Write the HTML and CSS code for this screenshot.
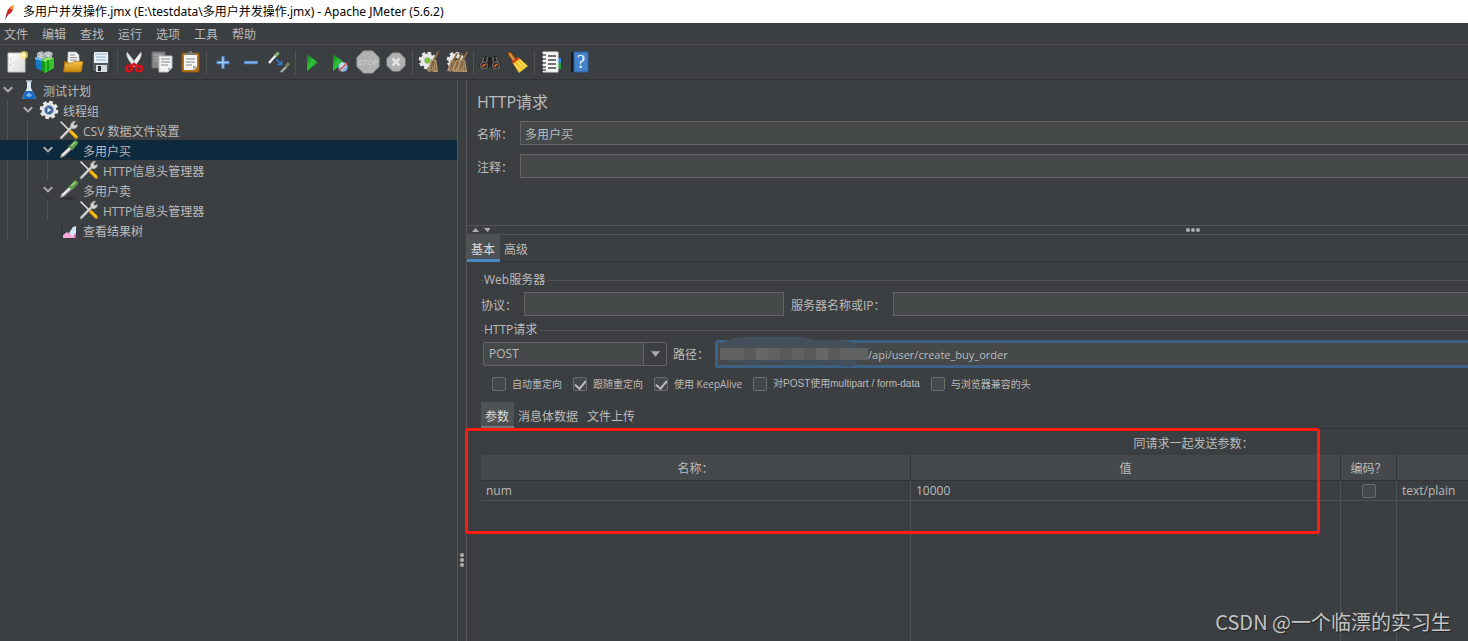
FILE: index.html
```html
<!DOCTYPE html>
<html lang="zh-CN">
<head>
<meta charset="utf-8">
<title>Apache JMeter</title>
<link rel="stylesheet" href="styles.css">
</head>
<body>
<svg class="defs" aria-hidden="true">
  <defs>
    <linearGradient id="gold" x1="0" y1="0" x2="0" y2="1"><stop offset="0" stop-color="#f4c34c"/><stop offset="1" stop-color="#c8860a"/></linearGradient>
    <linearGradient id="play" x1="0" y1="0" x2="1" y2="1"><stop offset="0" stop-color="#0b7a1c"/><stop offset=".5" stop-color="#2fc437"/><stop offset="1" stop-color="#0a6a14"/></linearGradient>
    <linearGradient id="paper" x1="0" y1="0" x2="1" y2="1"><stop offset="0" stop-color="#fff"/><stop offset="1" stop-color="#d8d8d8"/></linearGradient>
    <symbol id="tools" viewBox="0 0 20 20">
      <path d="M2.2 17.8 12.5 7.5" stroke="#8f9190" stroke-width="3" stroke-linecap="round"/>
      <path d="M2.4 17.4 12.5 7" stroke="#e4e6e3" stroke-width="1.4" stroke-linecap="round"/>
      <path d="M11.2 6.6 12 3.3 14.8 1.1 17 1.3 14.6 3.8 15.4 5.4 18.3 4.4 18.6 6 16.6 8.6 13.4 9Z" fill="#d3d5d2" stroke="#858784" stroke-width=".6"/>
      <path d="m2 2 8.5 8.5" stroke="#dedede" stroke-width="1.6" stroke-linecap="round"/>
      <path d="m11.800 11.800 5.400 5.200" stroke="#d99a00" stroke-width="3.600" stroke-linecap="round"/>
      <path d="m12 11.500 5 4.800" stroke="#ffd02c" stroke-width="1.6" stroke-linecap="round"/>
    </symbol>
    <symbol id="dropper" viewBox="0 0 20 20">
      <ellipse cx="9" cy="18.6" rx="8" ry="1" fill="#292c2e"/>
      <path d="m1.2 17.8 1.2-3.6 8.4-8 2.7 2.6-8.6 7.8Z" fill="#b8bbb9" stroke="#777" stroke-width=".6"/>
      <path d="m3.2 15.2 8-7.5" stroke="#fafafa" stroke-width="1.4"/>
      <path d="m9.6 5 5 4.8" stroke="#3f5a3a" stroke-width="2"/>
      <path d="m12.8 6.8 3.800-3.900" stroke="#5c9d47" stroke-width="4.8" stroke-linecap="round"/>
      <path d="m12.6 5.600 3.200-3.200" stroke="#9fd487" stroke-width="1.4" stroke-linecap="round"/>
    </symbol>
    <symbol id="broom" viewBox="0 0 12 22">
      <path d="M10.6 0 12 .8 8 9.5 5.8 8.6Z" fill="#8c6a42"/>
      <path d="M4.500 8 9.500 10 11 21H6L4.8 19 3.8 21 0 20Z" fill="#b3946c"/>
      <path d="M5.8 9.5 3 20M7 10 6 20M8 10.5 8.6 20M6.5 10 4.3 18" stroke="#6e5231" stroke-width=".7"/>
    </symbol>
    <symbol id="cog" viewBox="0 0 20 20">
      <circle cx="10" cy="10" r="7.6" fill="none" stroke="#e8e8e8" stroke-width="3.4" stroke-dasharray="3.4 2.57"/>
      <circle cx="10" cy="10" r="5.2" fill="none" stroke="#e6e6e6" stroke-width="4.600"/>
    </symbol>
    <symbol id="chev" viewBox="0 0 16 16"><path d="m3.8 5.2 4.2 4.2 4.2-4.2" fill="none" stroke="#adadad" stroke-width="2"/></symbol>
  </defs>
</svg>

<header class="titlebar">
  <svg class="feather" viewBox="0 0 12 18"><path d="M1 17 3 9Q5 3 10 1 11 4 8 9L4 12Z" fill="#d22128"/><path d="M3.4 10Q3 13 1 17L4 12Z" fill="#6d2a7c"/><path d="M6 5Q8 2 10 1 11 3 9 6Z" fill="#f59b2c"/></svg>
  <span>多用户并发操作.jmx (E:\testdata\多用户并发操作.jmx) - Apache JMeter (5.6.2)</span>
</header>

<nav class="menubar">
  <button>文件</button><button>编辑</button><button>查找</button><button>运行</button><button>选项</button><button>工具</button><button>帮助</button>
</nav>

<div class="toolbar">
  <button aria-label="新建"><svg viewBox="0 0 22 22"><path d="M2 2h17v19H2z" fill="url(#paper)" stroke="#c4c4c4"/><path d="M4 8h1M4 14h1" stroke="#999"/><circle cx="18" cy="4" r="4" fill="#f4ea6b" opacity=".7"/><circle cx="18" cy="4" r="2" fill="#fff9b0"/></svg></button>
  <button aria-label="模板"><svg viewBox="0 0 22 22"><path d="m3 2 5-2 2 2 4-2 5 2-2 7H3Z" fill="#aab2b5"/><path d="m5 1 3 4m3-4 3 4m2-4-2 5M4 5l5 2" stroke="#e5eaec"/><path d="m1 6 7 2v12l-6-3Z" fill="#1679c8"/><path d="m1 6 7 2v2L1 8Z" fill="#6bc3f4"/><path d="M8 8.500 13 6l7 2v9l-9 5-3-2Z" fill="#13941c"/><path d="m11 11 9-4v10l-9 5Z" fill="#36c62c"/><path d="m8 9 6-3 6 1-9 4Z" fill="#8be868"/><path d="M14 9v11" stroke="#128a19" stroke-width="1.500"/></svg></button>
  <button aria-label="打开"><svg viewBox="0 0 22 22"><path d="M2 10h3V7h13v4h2v9H2z" fill="#9b6908"/><path d="M6 1h8l3 3v9H6z" fill="#f6f6f6" stroke="#bbb" stroke-width=".6"/><path d="M8 4h5M8 6.500h7M8 9h7" stroke="#888"/><path d="M3 12h7l2-1.500h9L19 21H1.500Z" fill="url(#gold)" stroke="#ad740b" stroke-width=".7"/></svg></button>
  <button aria-label="保存"><svg viewBox="0 0 22 22"><path d="M2 2h18v18l-1 1H4l-2-2z" fill="#56595b" stroke="#25282a"/><path d="M4 1h14v11H4z" fill="#e9eff4"/><path d="M5 3h12M6 6h10M6 9h10" stroke="#8bb2d5"/><path d="M6 14h11v7H6z" fill="#d9dcdc"/><path d="M8 15h3v5H8z" fill="#292c2d"/></svg></button>
  <i class="sep"></i>
  <button aria-label="剪切"><svg viewBox="0 0 22 22"><path d="M4 1Q2 6 11 16L14 14Q9 7 4 1Z" fill="#e7e7e7" stroke="#aaa" stroke-width=".5"/><path d="M18 1Q20 6 11 16L8 14Q13 7 18 1Z" fill="#f5f5f5" stroke="#aaa" stroke-width=".5"/><circle cx="6" cy="17.500" r="2.800" fill="none" stroke="#dc1018" stroke-width="2.600"/><circle cx="16" cy="17.500" r="2.800" fill="none" stroke="#dc1018" stroke-width="2.600"/><path d="m8 15.500 3-2.500 3 2.500" fill="none" stroke="#d9141c" stroke-width="2.600"/></svg></button>
  <button aria-label="复制"><svg viewBox="0 0 22 22"><path d="M1 1h13v16H1z" fill="#858789" stroke="#6a6c6d"/><path d="M3 4h8M3 7h8M3 10h8" stroke="#b5b5b5"/><path d="M8 5h13v12l-4 4H8z" fill="#f2f2f2" stroke="#bbb"/><path d="M10 8h9M10 11h9M10 14h7" stroke="#8d8d8d"/><path d="M21 17h-4v4Z" fill="#bbb"/></svg></button>
  <button aria-label="粘贴"><svg viewBox="0 0 22 22"><rect x="3" y="2" width="17" height="19" rx="1" fill="#b67517" stroke="#8c5a13"/><path d="M5 4h13v12l-3 3H5z" fill="#f5f5f5"/><path d="M7 8h9M7 11h9M7 14h6" stroke="#888"/><path d="M7 4V2h3V0h3v2h3v2z" fill="#777b76"/><path d="M18 15h-4v4Z" fill="#aaa"/></svg></button>
  <i class="sep"></i>
  <button aria-label="展开"><svg viewBox="0 0 22 22"><path d="M11 5v13M4.500 11.500h13" stroke="#4b84c9" stroke-width="3.400"/><path d="M11 6v11M5.500 11.500h11" stroke="#a6cdf4" stroke-width="1.400"/></svg></button>
  <button aria-label="折叠"><svg viewBox="0 0 22 22"><path d="M4 11.500h14" stroke="#4b84c9" stroke-width="3.400"/><path d="M5 11.500h12" stroke="#8db8e8" stroke-width="1.400"/></svg></button>
  <button aria-label="切换"><svg viewBox="0 0 22 22"><path d="m1 12 7-8" stroke="#eee" stroke-width="2.400"/><path d="m7.500 5 3-3.500" stroke="#7fb56c" stroke-width="3.200"/><path d="m8 8 5 5m-3.500.5h4V9.500" fill="none" stroke="#307cdb" stroke-width="1.500"/><path d="m13 21 6-6" stroke="#aaa" stroke-width="2.400"/><path d="m17.500 16 3.500-4" stroke="#6d8065" stroke-width="3.200"/></svg></button>
  <i class="sep"></i>
  <button aria-label="启动"><svg viewBox="0 0 22 22"><path d="M6 3v17l11-8.500Z" fill="url(#play)"/></svg></button>
  <button aria-label="不停顿开始"><svg viewBox="0 0 22 22"><path d="M4 3v17l11-8.500Z" fill="url(#play)"/><circle cx="14" cy="16" r="4.800" fill="#7eb4df"/><path d="m10 14 3-3 5 3-5 6Z" fill="#dbeaf5" opacity=".7"/><path d="m10 20 8-8" stroke="#e04b43" stroke-width="1.600"/></svg></button>
  <button aria-label="停止"><svg class="big" viewBox="0 0 24 24"><path d="M7.500 1h9L23 7.500v9L16.500 23h-9L1 16.500v-9Z" fill="#b1b1b1" stroke="#a0a0a0"/><text x="12" y="15" text-anchor="middle" class="stop">STOP</text></svg></button>
  <button aria-label="关闭"><svg viewBox="0 0 22 22"><path d="M7.500 2h7L20 7.500v7L14.500 20h-7L2 14.500v-7Z" fill="#b1b1b1" stroke="#a0a0a0"/><path d="m7.500 7.500 7 7m0-7-7 7" stroke="#e2e2e2" stroke-width="2.600"/></svg></button>
  <i class="sep"></i>
  <button aria-label="清除"><svg viewBox="0 0 22 22"><use href="#cog" x="0" y="0" width="19" height="19"/><circle cx="9.500" cy="9.500" r="3" fill="#80c23e"/><use href="#broom" x="9" y="0" width="12" height="22"/></svg></button>
  <button aria-label="清除全部"><svg viewBox="0 0 22 22"><use href="#cog" x="0" y="0" width="19" height="19"/><use href="#broom" x="1" y="1" width="11" height="21"/><use href="#broom" x="6" y="1" width="11" height="21"/><use href="#broom" x="10" y="0" width="12" height="22"/></svg></button>
  <i class="sep"></i>
  <button aria-label="搜索"><svg viewBox="0 0 22 22"><path d="M4 6q2-3 4 0h6q2-3 4 0l4 8-4 5-6-2-1-3-1 3-6 2-4-5Z" fill="#202122"/><path d="M5 6 3 11m14-5 2 5M8 6v5m6-5v5" stroke="#85898a"/><circle cx="5" cy="14.500" r="3.600" fill="#3d2a22" stroke="#777"/><circle cx="17" cy="14.500" r="3.600" fill="#3d2a22" stroke="#777"/><path d="M3.500 16q1-3 3-2M15.500 16q1-3 3-2" stroke="#ed742b" stroke-width="1.500" fill="none"/></svg></button>
  <button aria-label="重置搜索"><svg viewBox="0 0 22 22"><path d="m3 3 5 7" stroke="#9b5414" stroke-width="4" stroke-linecap="round"/><path d="m3 3 4 6" stroke="#e49b38" stroke-width="1.800" stroke-linecap="round"/><path d="m5 11 6-5 10 9-9 7Z" fill="#f0c52c"/><path d="m8 13 6 7m-3-9 6 7m-4-9 6 7" stroke="#fff087"/><path d="m5 11 6-5 1.500 1.500-6.500 5Z" fill="#d82c20"/></svg></button>
  <i class="sep"></i>
  <button aria-label="函数助手"><svg viewBox="0 0 22 22"><path d="M18 7h3v5h-3z" fill="#2e88d9"/><path d="M18 12h3v6h-3z" fill="#25a436"/><path d="M3 1h15v20H3z" fill="#f4f4f4" stroke="#ddd"/><path d="M8 5h8M8 9h8M8 13h8M8 17h8" stroke="#444" stroke-width="1.400"/><path d="M1 4h5M1 8h5M1 12h5M1 16h5M1 19h5" stroke="#111" stroke-width="1.200"/></svg></button>
  <button aria-label="帮助"><svg viewBox="0 0 22 22"><path d="M3 1h3v20H3z" fill="#171c22"/><path d="M6 1h14v20H6z" fill="#4583ce" stroke="#2c5f9e"/><text x="13" y="17" text-anchor="middle" class="q">?</text></svg></button>
</div>

<div class="workspace">
  <aside class="tree">
    <ul>
      <li><div class="row"><svg class="chev"><use href="#chev"/></svg><svg class="ico" viewBox="0 0 20 20"><path d="M8 1h4v7l4.500 9q.5 2-1.500 2H5q-2 0-1.500-2L8 8Z" fill="#dfe9f3"/><path d="m6.500 11-3 6q-.5 2 1.500 2h10q2 0 1.500-2l-3-6Z" fill="#1769c8"/><path d="m7 16 2-3 3 1 1 2-3 1Z" fill="#78b5f1"/><path d="M7 1h6" stroke="#aebbc7" stroke-width="1.500"/></svg><span>测试计划</span></div>
        <ul>
          <li><div class="row"><svg class="chev"><use href="#chev"/></svg><svg class="ico" viewBox="0 0 20 20"><use href="#cog"/><circle cx="10" cy="10" r="4.500" fill="#3d6295" stroke="#8ea6c4"/><path d="M8.500 7.500v5l4-2.500Z" fill="#d5e5f5"/></svg><span>线程组</span></div>
            <ul>
              <li><div class="row"><i class="chev"></i><svg class="ico"><use href="#tools"/></svg><span>CSV 数据文件设置</span></div></li>
              <li><div class="row selected"><svg class="chev"><use href="#chev"/></svg><svg class="ico"><use href="#dropper"/></svg><span>多用户买</span></div>
                <ul><li><div class="row"><i class="chev"></i><svg class="ico"><use href="#tools"/></svg><span>HTTP信息头管理器</span></div></li></ul>
              </li>
              <li><div class="row"><svg class="chev"><use href="#chev"/></svg><svg class="ico"><use href="#dropper"/></svg><span>多用户卖</span></div>
                <ul><li><div class="row"><i class="chev"></i><svg class="ico"><use href="#tools"/></svg><span>HTTP信息头管理器</span></div></li></ul>
              </li>
              <li><div class="row"><i class="chev"></i><svg class="ico" viewBox="0 0 20 20"><path d="M3 3v15h15" fill="none" stroke="#222" stroke-dasharray="1 1"/><path d="M4 18v-3l4-3 3 2 6-5v9Z" fill="#f3a9d4"/><path d="m10 13 4-6 3-1v7l-4 3Z" fill="#d3e5fa"/><path d="m15 17 2-4v5Z" fill="#e0419c"/></svg><span>查看结果树</span></div></li>
            </ul>
          </li>
        </ul>
      </li>
    </ul>
  </aside>
  <div class="splitter"><i></i><i></i><i></i></div>

  <main class="editor">
    <div class="canvas">
      <section class="head">
        <h1>HTTP请求</h1>
        <div class="line"><label for="name">名称：</label><input id="name" class="grow" value="多用户买"></div>
        <div class="line"><label for="note">注释：</label><input id="note" class="grow"></div>
      </section>
      <div class="hsplit"><svg class="arrows" viewBox="0 0 18 6"><path d="m0 5 3.500-4L7 5Zm12-4h7l-3.500 4Z" fill="#adadad"/></svg><span class="dots"><i></i><i></i><i></i></span></div>
      <div class="tabs main-tabs"><button class="on">基本</button><button>高级</button></div>
      <div class="form">
        <div class="legend">Web服务器</div>
        <div class="server"><label for="proto">协议：</label><input id="proto"><label for="host">服务器名称或IP：</label><input id="host" class="grow"></div>
        <div class="legend">HTTP请求</div>
        <div class="request">
          <div class="combo"><select aria-label="方法"><option>POST</option></select><span><svg viewBox="0 0 10 6"><path d="M0 0h10L5 6Z" fill="#adadad"/></svg></span></div>
          <label for="path">路径：</label>
          <div class="path"><input id="path" value="/api/user/create_buy_order">
            <svg class="mask" viewBox="0 0 152 34"><path d="M2 12Q8 1 30 1h54q8 1 14 3h26q10 1 22 7-2 8-6 17-6 5-18 1l-10-2q-20 5-46 0l-20-1q-10 4-22 0H10Z" fill="#43505c"/><rect x="3" y="12" width="148" height="12" rx="1" fill="#606262"/><path d="M27 12h12v12H27zM63 12h12v12H63zM87 12h12v12H87zM111 12h12v12h-12z" fill="#595a5a"/><path d="M39 12h12v12H39zM99 12h12v12H99z" fill="#666868"/></svg>
          </div>
        </div>
        <div class="checks">
          <label><input type="checkbox">自动重定向</label>
          <label><input type="checkbox" checked>跟随重定向</label>
          <label><input type="checkbox" checked>使用 KeepAlive</label>
          <label><input type="checkbox">对POST使用multipart / form-data</label>
          <label><input type="checkbox">与浏览器兼容的头</label>
        </div>
      </div>
      <div class="tabs sub-tabs"><button class="on">参数</button><button>消息体数据</button><button>文件上传</button></div>
      <div class="params">
        <div class="caption" id="cap">同请求一起发送参数：</div>
        <table aria-labelledby="cap">
          <colgroup><col class="c1"><col class="c1"><col class="c2"><col></colgroup>
          <thead><tr><th>名称：</th><th>值</th><th>编码？</th><th></th></tr></thead>
          <tbody>
            <tr class="data"><td>num</td><td>10000</td><td class="mid"><input type="checkbox" aria-label="编码"></td><td>text/plain</td></tr>
            <tr><td></td><td></td><td></td><td></td></tr>
          </tbody>
        </table>
      </div>
    </div>
  </main>
</div>
<div class="highlight"></div>
<div class="watermark">CSDN @一个临漂的实习生</div>
</body>
</html>
```
FILE: styles.css
```css
* { box-sizing: border-box; }
body {
  margin: 0;
  height: 100vh;
  display: flex;
  flex-direction: column;
  overflow: hidden;
  position: relative;
  background: #3c3f41;
  color: #bbb;
  font: 12px/20px "Open Sans", "Noto Sans CJK SC", sans-serif;
}
button, input, select { font: inherit; color: inherit; margin: 0; }
button { border: 0; padding: 0; background: none; }
ul { list-style: none; margin: 0; padding: 0; }
.defs { position: absolute; width: 0; height: 0; }

.titlebar { display: flex; align-items: center; gap: 8px; height: 23px; padding: 1px 0 0 4px; background: #fff; color: #000; font-family: "Noto Sans", "Noto Sans CJK SC", sans-serif; }
.feather { width: 11px; height: 17px; }

.menubar { display: flex; gap: 14px; height: 22px; padding: 2px 0 0 4px; border-bottom: 1px solid #515151; }

.toolbar { display: flex; align-items: center; height: 35px; padding-left: 3px; border-bottom: 1px solid #323232; }
.toolbar button { width: 28px; height: 28px; display: grid; place-items: center; }
.toolbar svg { width: 22px; height: 22px; }
.toolbar .big { width: 24px; height: 24px; }
.stop { font: 8px "Liberation Sans", sans-serif; fill: #d0d0d0; }
.q { font: 18px "Liberation Serif", serif; fill: #fff; }
.sep { width: 1px; height: 24px; margin: 0 2px; background: #515151; }

.workspace { flex: 1; display: flex; min-height: 0; }
.tree { width: 458px; flex: none; overflow: hidden; border-right: 1px solid #555; }
.tree ul ul { position: relative; padding-left: 20px; }
.tree ul ul::before { content: ""; position: absolute; left: 7px; top: 0; bottom: 0; width: 1px; background: #505355; }
.row { display: flex; align-items: center; height: 20px; line-height: 20px; white-space: nowrap; }
.row span { padding-top: 4px; }
.row.selected { background: #0d293e; margin-left: -40px; padding-left: 40px; }
.chev { width: 16px; height: 16px; margin-right: 3px; flex: none; }
.ico { width: 20px; height: 20px; margin-right: 4px; flex: none; }
.splitter { width: 8px; flex: none; display: flex; flex-direction: column; align-items: center; gap: 1px; padding-top: 473px; }
.splitter i, .dots i { width: 4px; height: 4px; border-radius: 2px; background: #adadad; }

.editor { flex: 1; min-width: 0; overflow: hidden; border-left: 1px solid #555; }
.canvas { width: calc(100% + 452px); height: 100%; display: flex; flex-direction: column; }
.head { height: 145px; padding: 12px 10px 0; }
h1 { margin: 0 0 9px; font-size: 16px; line-height: 20px; font-weight: 400; }
.line { display: flex; align-items: center; gap: 7px; margin-bottom: 9px; }
.line label { width: 36px; padding-top: 3px; }
input:not([type]) { height: 24px; min-width: 0; padding: 2px 4px 0; background: #45494a; border: 1px solid #646464; outline: 0; }
.grow { flex: 1; }
.hsplit { display: flex; align-items: center; height: 10px; padding-left: 5px; border: solid #515355; border-width: 1px 0; }
.arrows { width: 18px; height: 6px; }
.dots { flex: 1; display: flex; justify-content: center; gap: 1px; padding-right: 24px; }

.tabs { display: flex; height: 27px; border-bottom: 1px solid #323437; }
.tabs button { height: 27px; padding: 5px 5px 0 4px; border-bottom: 3px solid transparent; }
.tabs .on { background: #4e5254; border-color: #4a88c7; color: #ddd; }
.form { padding: 8px 14px 0; }
.legend { display: flex; align-items: center; gap: 3px; height: 20px; line-height: 22px; }
.legend::before, .legend::after { content: ""; height: 1px; width: 3px; background: #555; }
.legend::before { margin-right: -3px; }
.legend::after { flex: 1; }
.server { display: flex; align-items: center; margin: 2px -14px 4px 0; height: 24px; }
.server label { margin-right: 7px; padding-top: 3px; }
#proto { width: 260px; margin-right: 7px; }
.request { display: flex; align-items: center; height: 28px; padding-left: 2px; margin-right: -14px; }
.combo { position: relative; width: 184px; height: 24px; margin-right: 6px; }
.combo select { appearance: none; width: 100%; height: 24px; padding: 0 5px; border: 1px solid #646464; border-radius: 2px; background: #45494a; outline: 0; }
.combo span { position: absolute; right: 1px; top: 1px; width: 23px; height: 22px; display: grid; place-items: center; border-left: 1px solid #646464; background: #3c3f41; pointer-events: none; }
.combo svg { width: 9px; height: 6px; }
.request label { width: 42px; padding-top: 2px; }
.path { position: relative; flex: 1; }
.path input:not([type]) { display: block; width: 100%; height: 28px; padding: 0 0 0 150px; border: 3px solid #3d6185; border-radius: 3px; font-size: 11px; }
.mask { position: absolute; left: 2px; top: -4px; width: 152px; height: 34px; }
.checks { display: flex; gap: 11px; padding-left: 11px; height: 32px; font-size: 10px; }
.checks label { display: flex; align-items: center; gap: 6px; white-space: nowrap; }
.checks label:nth-child(4) { font-family: "Liberation Sans", "Noto Sans CJK SC", sans-serif; }
input[type=checkbox] { appearance: none; width: 14px; height: 14px; border: 1px solid #6b6b6b; border-radius: 2px; background: #43494a; display: grid; place-items: start center; overflow: hidden; }
input[type=checkbox]:checked::before { content: ""; width: 5px; height: 9px; border: solid #bbb; border-width: 0 2px 2px 0; transform: rotate(40deg); }

.sub-tabs { margin: 2px 0 0 14px; }
.sub-tabs .on { border-color: #747a80; }
.params { flex: 1; display: flex; flex-direction: column; padding: 0 14px; }
.caption { height: 26px; line-height: 30px; text-align: center; }
table { flex: 1; width: 100%; table-layout: fixed; border-collapse: separate; border-spacing: 0; }
.c1 { width: 430px; }
.c2 { width: 56px; }
th { height: 26px; padding: 2px 0 0; background: #45494b; border-right: 1px solid #323437; border-bottom: 1px solid #323437; font-weight: 400; }
td { padding: 0 5px; border-right: 1px solid #505355; }
.data td { height: 20px; line-height: 19px; border-bottom: 1px solid #505355; }
.data .mid input { margin: 0 auto; }

.highlight { position: absolute; left: 465px; top: 428px; width: 855px; height: 106px; border: 3px solid #ff1d12; border-radius: 3px; }
.watermark { position: absolute; right: 17px; bottom: 5px; font: 20px/28px "Noto Sans CJK SC", sans-serif; color: #c4c4c4; text-shadow: 1px 1px 1px #222; }
```
